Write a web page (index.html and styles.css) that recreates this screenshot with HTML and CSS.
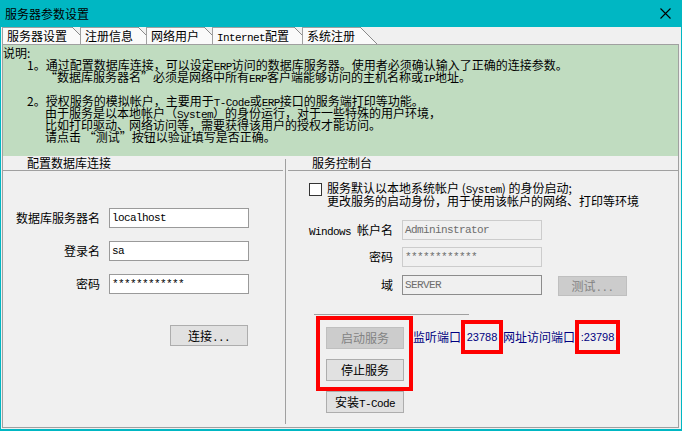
FILE: index.html
```
<!DOCTYPE html>
<html lang="zh-CN">
<head>
<meta charset="utf-8">
<title>服务器参数设置</title>
<link rel="stylesheet" href="styles.css">
</head>
<body>
<div class="window">
  <div class="titlebar">
    <span class="title">服务器参数设置</span>
    <svg class="close" width="11" height="11" viewBox="0 0 11 11"><path d="M0.5 0.5L10.5 10.5M10.5 0.5L0.5 10.5" stroke="#000" stroke-width="1.1" fill="none"/></svg>
  </div>
  <div class="client">
    <div class="tabs">
      <div class="tab active">服务器设置</div>
      <div class="tab">注册信息</div>
      <div class="tab">网络用户</div>
      <div class="tab"><span class="mono">Internet</span>配置</div>
      <div class="tab">系统注册</div>
    </div>
    <div class="page">
      <div class="notes">
        <div class="line">说明:</div>
        <div class="line num">1。通过配置数据库连接，可以设定<span class="mono">ERP</span>访问的数据库服务器。使用者必须确认输入了正确的连接参数。</div>
        <div class="line cont">“数据库服务器名”必须是网络中所有<span class="mono">ERP</span>客户端能够访问的主机名称或<span class="mono">IP</span>地址。</div>
        <div class="line"></div>
        <div class="line num">2。授权服务的模拟帐户，主要用于<span class="mono">T-Code</span>或<span class="mono">ERP</span>接口的服务端打印等功能。</div>
        <div class="line cont">由于服务是以本地帐户（<span class="mono">System</span>）的身份运行，对于一些特殊的用户环境，</div>
        <div class="line cont">比如打印驱动、网络访问等，需要获得该用户的授权才能访问。</div>
        <div class="line cont">请点击 “测试”按钮以验证填写是否正确。</div>
      </div>
      <div class="lower">
        <div class="grp grp-left">
          <div class="gtitle">配置数据库连接</div>
          <div class="form">
            <div class="lbl">数据库服务器名</div>
            <div class="field">localhost</div>
            <div class="lbl">登录名</div>
            <div class="field">sa</div>
            <div class="lbl">密码</div>
            <div class="field">************</div>
          </div>
          <div class="btn btn-connect">连接<span class="mono">...</span></div>
        </div>
        <div class="vsep"></div>
        <div class="grp grp-right">
          <div class="gtitle">服务控制台</div>
          <div class="check-row">
            <div class="cb"></div>
            <div class="cb-text">
              <div class="cb-line">服务默认以本地系统帐户 (<span class="mono">System</span>) 的身份启动;</div>
              <div class="cb-line">更改服务的启动身份，用于使用该帐户的网络、打印等环境</div>
            </div>
          </div>
          <div class="form form-right">
            <div class="lbl"><span class="mono">Windows </span>帐户名</div>
            <div class="field dis">Admininstrator</div>
            <div></div>
            <div class="lbl">密码</div>
            <div class="field dis">************</div>
            <div></div>
            <div class="lbl">域</div>
            <div class="field dis dom">SERVER</div>
            <div class="btn btn-dis btn-test">测试<span class="mono">...</span></div>
          </div>
          <div class="hsep"></div>
          <div class="svc-row">
            <div class="redbox rb1">
              <div class="btn btn-dis">启动服务</div>
              <div class="btn">停止服务</div>
            </div>
            <div class="ports">
              <span class="plabel">监听端口</span>
              <div class="redbox rb2">23788</div>
              <span class="plabel">网址访问端口</span>
              <div class="redbox rb3">:23798</div>
            </div>
          </div>
          <div class="btn btn-install">安装<span class="mono">T-Code</span></div>
        </div>
      </div>
    </div>
  </div>
</div>
</body>
</html>
```
FILE: styles.css
```
* {
  box-sizing: border-box;
  margin: 0;
  padding: 0;
}

html,
body {
  width: 682px;
  height: 431px;
  overflow: hidden;
}

body {
  background: #00b7c3;
  font-family: "Noto Sans CJK SC", "Noto Sans", sans-serif;
  font-size: 12px;
  color: #000;
}

.mono {
  font-family: "Liberation Mono", "DejaVu Sans Mono", monospace;
  font-size: 11px;
  letter-spacing: -0.6px;
  line-height: 0;
}

.window {
  width: 682px;
  height: 431px;
  display: flex;
  flex-direction: column;
}

.titlebar {
  height: 27px;
  flex: none;
  display: flex;
  align-items: center;
  justify-content: space-between;
  padding: 0 11px 0 5px;
  line-height: 14px;
}

.close {
  display: block;
}

.client {
  flex: 1;
  margin: 0 1px 2px 1px;
  background: #f0f0f0;
  padding: 0 2px 1px 1px;
  display: flex;
  flex-direction: column;
}

/* tabs */
.tabs {
  height: 17px;
  flex: none;
  display: flex;
}

.tab {
  position: relative;
  height: 17px;
  border-top: 1px solid #a0a0a0;
  border-left: 1px solid #a0a0a0;
  background: #fafafa;
  padding: 0 5px 0 4px;
  margin-right: 8px;
  line-height: 16px;
  white-space: nowrap;
}

.tab::after {
  content: "";
  position: absolute;
  left: 100%;
  top: -1px;
  width: 17px;
  height: 17px;
  background: linear-gradient(to top right, #fafafa calc(50% - 0.7px), #8a8a8a calc(50% - 0.5px), #8a8a8a calc(50% + 0.5px), transparent calc(50% + 0.7px));
}

/* page */
.page {
  flex: 1;
  border: 1px solid #a0a0a0;
  display: flex;
  flex-direction: column;
}

.notes {
  flex: none;
  height: 111px;
  background: #c0dcc0;
  padding-top: 2px;
}

.line {
  height: 12px;
  line-height: 12px;
  white-space: pre;
}

.num {
  padding-left: 24px;
}

.cont {
  padding-left: 42px;
}

.lower {
  flex: 1;
  display: flex;
}

.grp-left {
  width: 282px;
  flex: none;
}

.vsep {
  width: 1px;
  background: #a0a0a0;
  margin: 3px 0;
}

.grp-right {
  flex: 1;
}

.gtitle {
  height: 15px;
  border-bottom: 1px solid #a0a0a0;
  line-height: 14px;
  padding-left: 24px;
}

.grp-left .gtitle {
  margin-right: 2px;
}

.grp-right .gtitle {
  margin-left: 2px;
}

/* forms */
.form {
  display: grid;
  grid-template-columns: 97px 140px;
  column-gap: 9px;
  row-gap: 13px;
  align-items: center;
  margin-top: 37px;
}

.lbl {
  text-align: right;
  line-height: 14px;
  white-space: nowrap;
}

.field {
  height: 20px;
  border: 1px solid #9a9a9a;
  background: #fff;
  font-family: "Liberation Mono", "DejaVu Sans Mono", monospace;
  font-size: 11px;
  letter-spacing: -0.6px;
  line-height: 18px;
  padding-left: 2px;
  white-space: nowrap;
}

.field.dis {
  background: #f0f0f0;
  border-color: #cccccc;
  color: #6d6d6d;
}

.field.dom {
  border-color: #8c8c8c;
}

.btn {
  width: 78px;
  height: 22px;
  border: 1px solid #adadad;
  background: #e1e1e1;
  text-align: center;
  line-height: 20px;
  white-space: nowrap;
}

.btn-dis {
  background: #cccccc;
  border-color: #bfbfbf;
  color: #838383;
}

.btn-connect {
  height: 21px;
  line-height: 19px;
  margin: 31px 0 0 167px;
}

/* right group */
.check-row {
  display: flex;
  margin: 10px 0 0 23px;
}

.cb {
  width: 13px;
  height: 13px;
  border: 1px solid #333;
  background: #fff;
  margin-top: 2px;
  flex: none;
}

.cb-text {
  margin-left: 5px;
}

.cb-line {
  height: 13px;
  line-height: 13px;
  white-space: pre;
}

.form-right {
  grid-template-columns: 107px 140px 69px;
  row-gap: 7px;
  margin-top: 13px;
}

.btn-test {
  width: 69px;
  height: 20px;
  line-height: 18px;
  margin-left: 7px;
  margin-top: 2px;
}

.hsep {
  width: 155px;
  height: 1px;
  background: #a0a0a0;
  margin: 18px 0 0 28px;
}

.svc-row {
  display: flex;
  align-items: flex-start;
  margin: 1px 0 0 30px;
}

.redbox {
  border: 4px solid #ff0000;
}

.rb1 {
  display: flex;
  flex-direction: column;
  gap: 10px;
  padding: 7px 5px 6px 6px;
}

.ports {
  display: flex;
  align-items: center;
  height: 34px;
  margin-top: 4px;
  color: #000080;
}

.plabel {
  line-height: 14px;
  white-space: nowrap;
}

.rb2,
.rb3 {
  height: 34px;
  display: flex;
  align-items: center;
  justify-content: center;
  font-family: "Liberation Sans", Arial, sans-serif;
  font-size: 11px;
}

.rb2 {
  width: 42px;
}

.rb3 {
  width: 45px;
}

.btn-install {
  margin-left: 40px;
}
```
